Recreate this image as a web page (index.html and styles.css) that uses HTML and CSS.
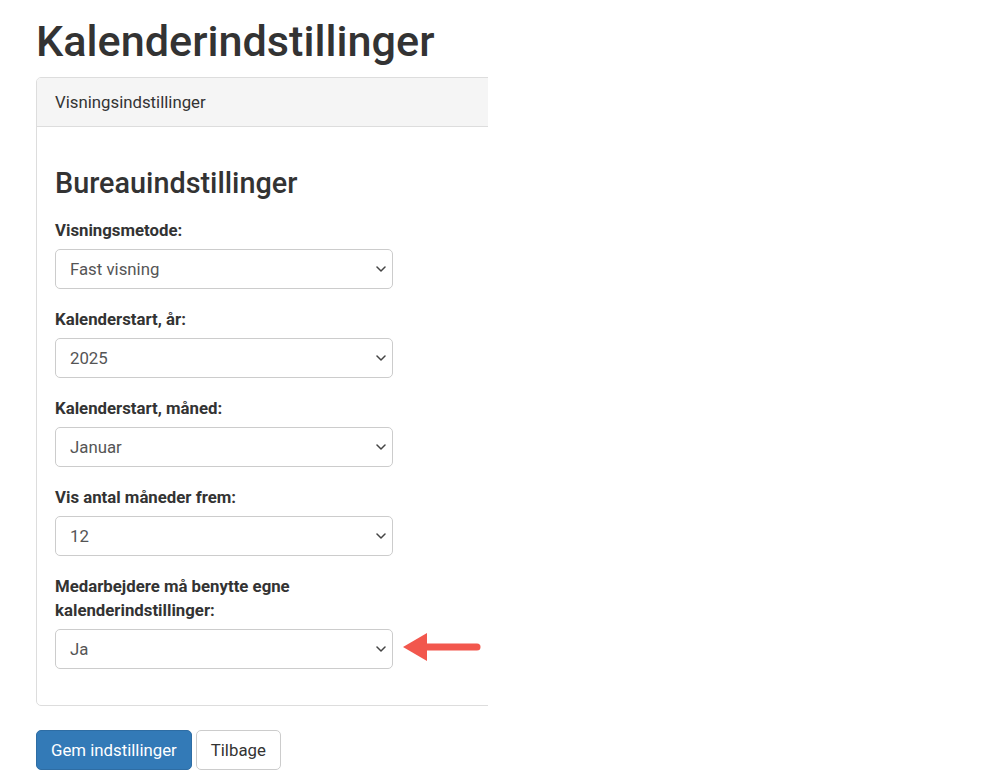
FILE: index.html
```html
<!DOCTYPE html>
<html lang="da">
<head>
<meta charset="utf-8">
<title>Kalenderindstillinger</title>
<link rel="stylesheet" href="styles.css">
</head>
<body>
<div class="page">
  <h1 class="page-title">Kalenderindstillinger</h1>
  <div class="panel-clip">
    <div class="panel">
      <div class="panel-heading">Visningsindstillinger</div>
      <div class="panel-body">
        <h3 class="section-title">Bureauindstillinger</h3>
        <div class="form-group">
          <label class="form-label">Visningsmetode:</label>
          <div class="select-wrap">
            <select class="form-select"><option>Fast visning</option></select>
            <svg class="chev" viewBox="0 0 10 6" width="10" height="6"><path d="M1 1 L5 5 L9 1" fill="none" stroke="#444" stroke-width="1.5" stroke-linecap="round" stroke-linejoin="round"/></svg>
          </div>
        </div>
        <div class="form-group">
          <label class="form-label">Kalenderstart, år:</label>
          <div class="select-wrap">
            <select class="form-select"><option>2025</option></select>
            <svg class="chev" viewBox="0 0 10 6" width="10" height="6"><path d="M1 1 L5 5 L9 1" fill="none" stroke="#444" stroke-width="1.5" stroke-linecap="round" stroke-linejoin="round"/></svg>
          </div>
        </div>
        <div class="form-group">
          <label class="form-label">Kalenderstart, måned:</label>
          <div class="select-wrap">
            <select class="form-select"><option>Januar</option></select>
            <svg class="chev" viewBox="0 0 10 6" width="10" height="6"><path d="M1 1 L5 5 L9 1" fill="none" stroke="#444" stroke-width="1.5" stroke-linecap="round" stroke-linejoin="round"/></svg>
          </div>
        </div>
        <div class="form-group">
          <label class="form-label">Vis antal måneder frem:</label>
          <div class="select-wrap">
            <select class="form-select"><option>12</option></select>
            <svg class="chev" viewBox="0 0 10 6" width="10" height="6"><path d="M1 1 L5 5 L9 1" fill="none" stroke="#444" stroke-width="1.5" stroke-linecap="round" stroke-linejoin="round"/></svg>
          </div>
        </div>
        <div class="form-group">
          <label class="form-label">Medarbejdere må benytte egne<br>kalenderindstillinger:</label>
          <div class="select-wrap">
            <select class="form-select"><option>Ja</option></select>
            <svg class="chev" viewBox="0 0 10 6" width="10" height="6"><path d="M1 1 L5 5 L9 1" fill="none" stroke="#444" stroke-width="1.5" stroke-linecap="round" stroke-linejoin="round"/></svg>
            <svg class="pointer-arrow" viewBox="0 0 80 30" width="80" height="30"><polygon points="0,14 24,0 24,28" fill="#f2574d"/><line x1="20" y1="14" x2="74" y2="14" stroke="#f2574d" stroke-width="7" stroke-linecap="round"/></svg>
          </div>
        </div>
      </div>
    </div>
  </div>
  <div class="actions">
    <button class="btn btn-primary">Gem indstillinger</button>
    <button class="btn btn-default">Tilbage</button>
  </div>
</div>
</body>
</html>
```

FILE: styles.css
```css
* { box-sizing: border-box; }
html, body { margin: 0; padding: 0; background: #fff; }
body {
  font-family: Roboto, "Liberation Sans", Arial, sans-serif;
  font-size: 16.8px;
  line-height: 24px;
  color: #333;
}
.page { padding-left: 36px; }
.page-title {
  font-size: 43.2px;
  font-weight: 500;
  line-height: 47px;
  margin: 18px 0 12px;
  color: #333;
}
.panel-clip { width: 452px; overflow: hidden; margin-bottom: 24px; }
.panel {
  width: 700px;
  border: 1px solid #ddd;
  border-radius: 5px;
  background: #fff;
}
.panel-heading {
  background: #f5f5f5;
  border-bottom: 1px solid #ddd;
  padding: 12px 18px;
  line-height: 24px;
  border-radius: 4px 4px 0 0;
}
.panel-body { padding: 18px; }
.section-title {
  font-size: 28.8px;
  font-weight: 500;
  line-height: 32px;
  margin: 22px 0 19px;
}
.form-group { margin-bottom: 18px; }
.form-label {
  display: block;
  font-weight: 700;
  margin-bottom: 7px;
}
.select-wrap { position: relative; width: 338px; }
.form-select {
  display: block;
  width: 338px;
  height: 40px;
  padding: 0 14px;
  font-family: inherit;
  font-size: 16.8px;
  color: #555;
  background: #fff;
  border: 1px solid #ccc;
  border-radius: 5px;
  -webkit-appearance: none;
  appearance: none;
}
.chev { position: absolute; right: 7px; top: 17px; pointer-events: none; }
.pointer-arrow { position: absolute; left: 348px; top: 4px; }
.actions { display: flex; gap: 4px; }
.btn {
  font-family: inherit;
  font-size: 16.8px;
  line-height: 24px;
  padding: 7px 14px;
  border: 1px solid transparent;
  border-radius: 5px;
  cursor: pointer;
}
.btn-primary { background: #337ab7; border-color: #2e6da4; color: #fff; }
.btn-default { background: #fff; border-color: #ccc; color: #333; }
```
